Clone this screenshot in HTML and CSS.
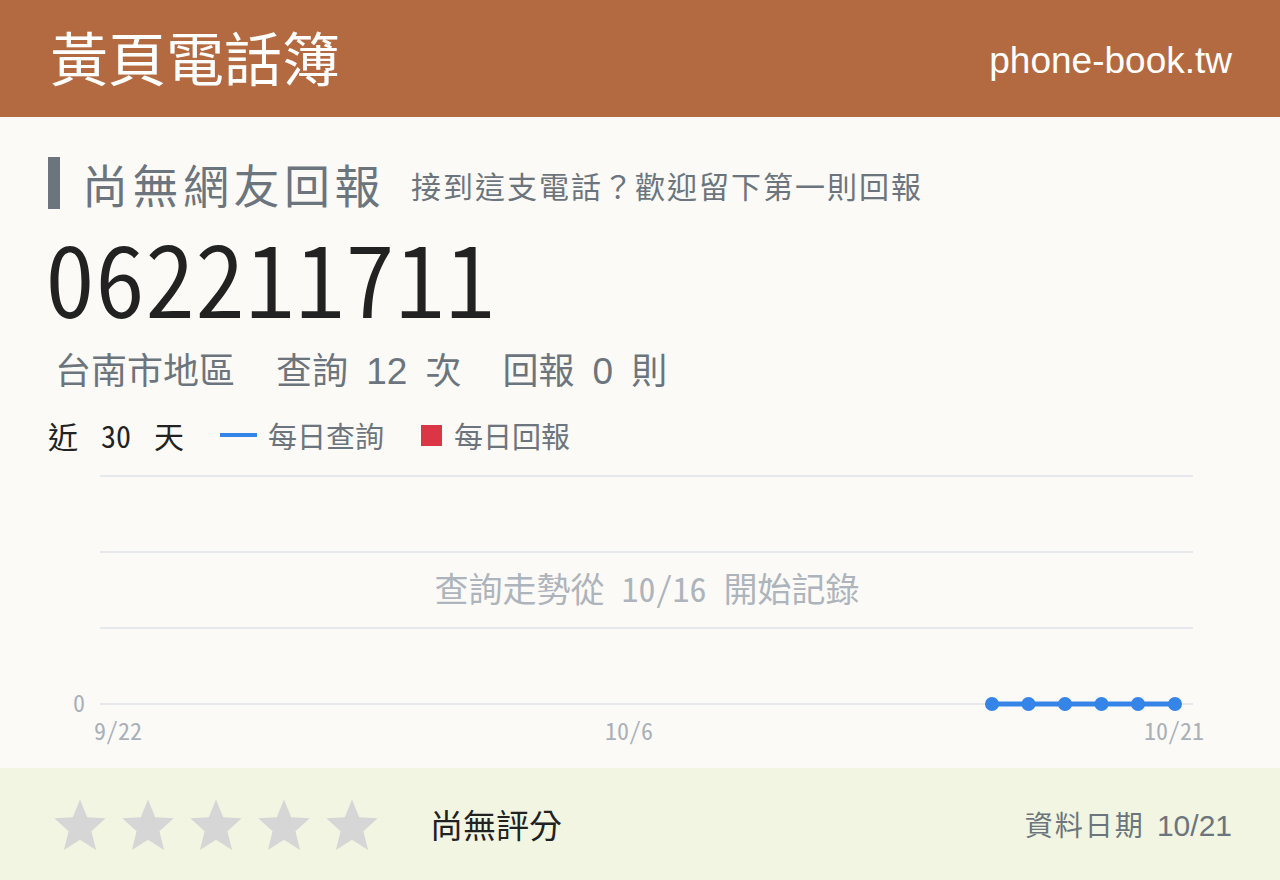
FILE: index.html
```html
<!DOCTYPE html>
<html lang="zh-Hant">
<head>
  <meta charset="UTF-8">
  <title>062211711 - 黃頁電話簿</title>
  <link rel="stylesheet" href="styles.css">
</head>
<body>

  <header class="topbar">
    <div class="brand">黃頁電話簿</div>
    <div class="domain">phone-book.tw</div>
  </header>

  <main class="content">
    <div class="report-head">
      <h1>尚無網友回報</h1>
      <span class="hint">接到這支電話？歡迎留下第一則回報</span>
    </div>

    <div class="number">062211711</div>

    <div class="stats">
      <span class="stat">台南市地區</span>
      <span class="stat">查詢 <b>12</b> 次</span>
      <span class="stat">回報 <b>0</b> 則</span>
    </div>

    <div class="legend">
      <span class="range">近 30 天</span>
      <span class="key"><i class="swatch line"></i>每日查詢</span>
      <span class="key"><i class="swatch box"></i>每日回報</span>
    </div>

    <!-- 近 30 天查詢走勢 -->
    <svg class="chart" width="1184" height="308" viewBox="0 0 1184 308">
      <g class="grid">
        <line x1="52" y1="16" x2="1145" y2="16"/>
        <line x1="52" y1="92" x2="1145" y2="92"/>
        <line x1="52" y1="168" x2="1145" y2="168"/>
        <line x1="52" y1="244" x2="1145" y2="244"/>
      </g>
      <text class="axis" x="37" y="252" text-anchor="end">0</text>
      <text class="axis" x="70" y="280" text-anchor="middle">9/22</text>
      <text class="axis" x="581" y="280" text-anchor="middle">10/6</text>
      <text class="axis" x="1126" y="280" text-anchor="middle">10/21</text>
      <text class="empty-note" x="599" y="142" text-anchor="middle">查詢走勢從 10/16 開始記錄</text>
      <polyline class="series" points="944,244 1127,244"/>
      <g class="dots">
        <circle cx="944" cy="244" r="7"/>
        <circle cx="980.5" cy="244" r="7"/>
        <circle cx="1017" cy="244" r="7"/>
        <circle cx="1053.5" cy="244" r="7"/>
        <circle cx="1090" cy="244" r="7"/>
        <circle cx="1127" cy="244" r="7"/>
      </g>
    </svg>
  </main>

  <footer class="rating">
    <div class="stars">
      <svg viewBox="0 0 24 24"><path d="M12 1.5l3.1 7.6 7.9.4-6.1 5.6 2 8-6.9-4.4-6.9 4.4 2-8L1 9.5l7.9-.4z"/></svg>
      <svg viewBox="0 0 24 24"><path d="M12 1.5l3.1 7.6 7.9.4-6.1 5.6 2 8-6.9-4.4-6.9 4.4 2-8L1 9.5l7.9-.4z"/></svg>
      <svg viewBox="0 0 24 24"><path d="M12 1.5l3.1 7.6 7.9.4-6.1 5.6 2 8-6.9-4.4-6.9 4.4 2-8L1 9.5l7.9-.4z"/></svg>
      <svg viewBox="0 0 24 24"><path d="M12 1.5l3.1 7.6 7.9.4-6.1 5.6 2 8-6.9-4.4-6.9 4.4 2-8L1 9.5l7.9-.4z"/></svg>
      <svg viewBox="0 0 24 24"><path d="M12 1.5l3.1 7.6 7.9.4-6.1 5.6 2 8-6.9-4.4-6.9 4.4 2-8L1 9.5l7.9-.4z"/></svg>
    </div>
    <div class="score">尚無評分</div>
    <div class="updated">資料日期 <span>10/21</span></div>
  </footer>

</body>
</html>
```

FILE: styles.css
```css
html, body {
  margin: 0; padding: 0;
  width: 1280px; height: 880px;
  overflow: hidden;
}
body {
  font-family: "Noto Sans CJK TC", "Noto Sans", sans-serif;
  background: #fbfaf7;
  color: #222;
  display: flex; flex-direction: column;
}

/* 頁首 */
.topbar {
  height: 117px; flex: none;
  background: #b46a40; color: #fff;
  display: flex; align-items: center; justify-content: space-between;
  padding: 0 48px 0 50px;
  box-sizing: border-box;
}
.brand { font-size: 58px; line-height: 1; margin-top: -6px; }
.domain {
  font-family: "Liberation Sans", Arial, sans-serif;
  font-size: 37px; margin-top: 4px;
}

.content {
  flex: 1;
  padding: 40px 48px 0;
}

/* 回報標題 */
.report-head {
  display: flex; align-items: center;
  height: 52px;
  border-left: 12px solid #6c757d;
  padding-left: 22px;
}
.report-head h1 {
  margin: 0; font-weight: 400;
  font-size: 46px; line-height: 52px;
  color: #6c757d; letter-spacing: 4.5px;
}
.hint {
  margin-left: 26px; margin-top: 4px;
  font-size: 30px; color: #6c757d;
  letter-spacing: 2px;
}

.number {
  margin-top: 16px;
  font-size: 100px; line-height: 100px;
  font-weight: 350;
  font-feature-settings: "hwid";
  color: #222;
  margin-left: -3px;
}

.stats {
  margin-top: 21px;
  font-size: 36px; line-height: 44px;
  color: #6c757d;
  padding-left: 7px;
  word-spacing: 10px;
}
.stats b {
  font-weight: 400;
  font-family: "Liberation Sans", Arial, sans-serif;
  font-size: 37px; line-height: 1;
}
.stat + .stat { margin-left: 23px; }

/* 圖例 */
.legend {
  margin-top: 25px;
  display: flex; align-items: center;
  height: 40px;
}
.range {
  font-size: 30px; color: #222;
  font-feature-settings: "hwid";
  word-spacing: 8px;
  margin-right: 36px;
}
.key {
  display: flex; align-items: center;
  font-size: 29px; color: #6c757d;
  margin-right: 37px;
}
.swatch { display: inline-block; margin-right: 11px; }
.swatch.line { width: 37px; height: 4px; background: #3584e8; }
.swatch.box { width: 21px; height: 21px; background: #dc3545; margin-right: 12px; }

/* 走勢圖 */
.chart { display: block; margin-top: 5px; }
.chart .grid line { stroke: #e6e8ec; stroke-width: 2; }
.chart .axis {
  font-size: 24px; fill: #a9b0b8;
  font-feature-settings: "hwid";
}
.chart .empty-note {
  font-size: 34px; fill: #aeb4bb;
  font-feature-settings: "hwid";
}
.chart .series { stroke: #3584e8; stroke-width: 5; fill: none; }
.chart .dots circle { fill: #3584e8; }

/* 評分 */
.rating {
  height: 112px; flex: none;
  background: #f1f5e2;
  display: flex; align-items: center;
  padding: 0 48px 0 52px;
}
.stars { display: flex; gap: 12px; }
.stars svg { width: 56px; height: 56px; fill: #d6d6d6; display: block; }
.score { margin-left: 50px; font-size: 33px; color: #222; }
.updated {
  margin-left: auto;
  font-size: 28px; color: #6c757d;
  letter-spacing: 2px;
}
.updated span {
  font-family: "Liberation Sans", Arial, sans-serif;
  font-size: 30px; margin-left: 4px;
  letter-spacing: 0;
}
```
